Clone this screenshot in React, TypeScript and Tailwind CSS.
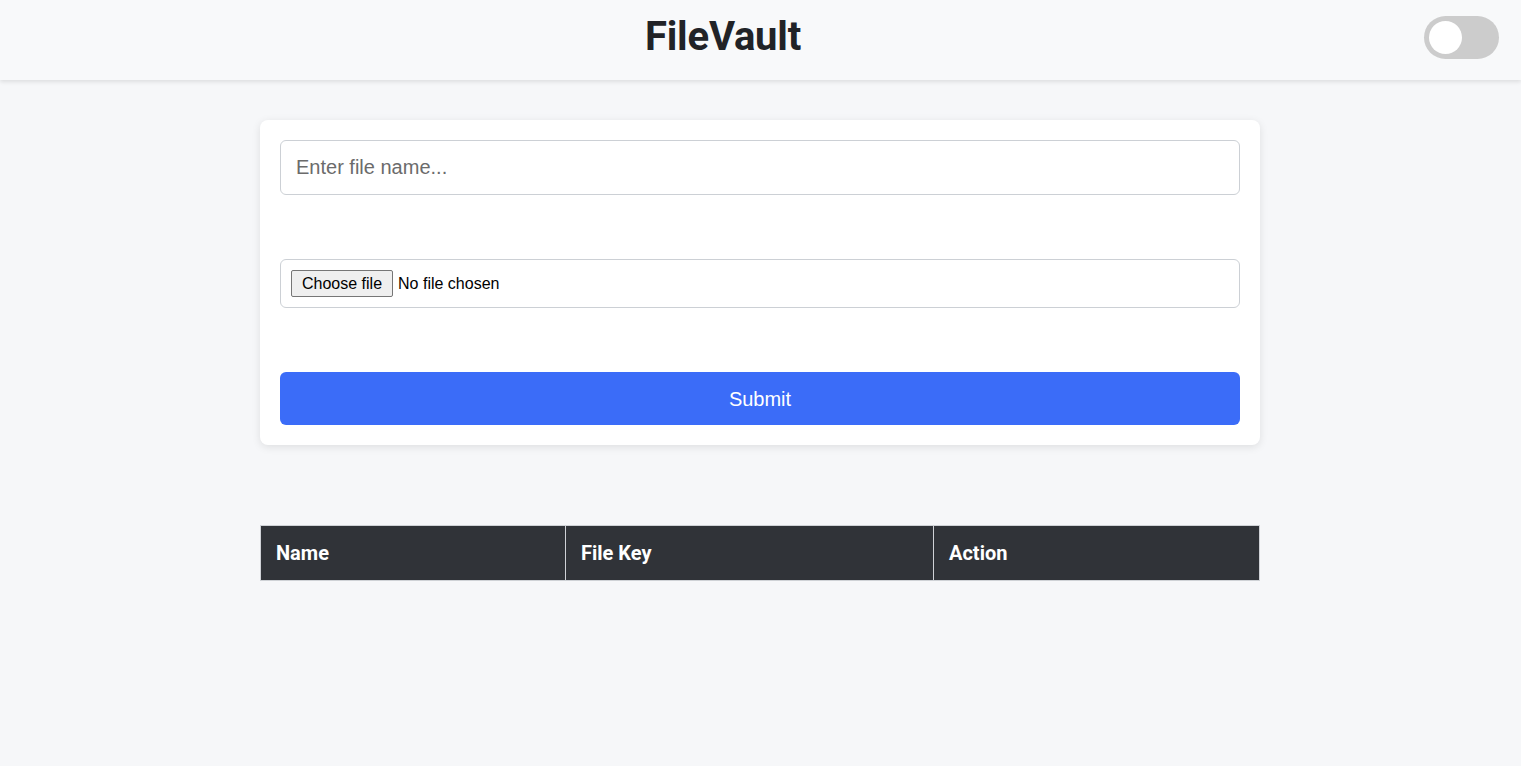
import { useState } from "react";

export default function App() {
  const [dark, setDark] = useState(false);
  const [fileName, setFileName] = useState("");

  return (
    <div className="min-h-screen bg-[#f6f7f9] font-['Liberation_Sans',Arial,sans-serif]">
      {/* Header */}
      <header className="h-[80px] bg-[#f8f9fa] shadow-[0_2px_4px_rgba(0,0,0,0.1)] flex items-center px-[22px] pb-[6px]">
        <h1 className="flex-1 text-center font-['Roboto',sans-serif] font-bold text-[40px] text-[#212327] tracking-[-0.2px]">
          FileVault
        </h1>
        <button
          onClick={() => setDark(!dark)}
          className="w-[75px] h-[43px] rounded-full bg-[#cccccc] flex items-center px-[5px]"
        >
          <span className="w-[33px] h-[33px] rounded-full bg-white block"></span>
        </button>
      </header>

      {/* Upload form */}
      <main className="flex flex-col items-center pt-[40px] pr-px">
        <div className="w-[1000px] bg-white rounded-[8px] shadow-[0_2px_8px_rgba(0,0,0,0.1)] p-[20px] flex flex-col gap-[64px]">
          <input
            type="text"
            placeholder="Enter file name..."
            className="h-[55px] w-full border border-[#ccd0d5] rounded-[6px] px-[15px] text-[20px] text-[#333] placeholder:text-[#6b6b6b] outline-none"
          />
          <label className="h-[49px] w-full border border-[#ccd0d5] rounded-[6px] px-[10px] flex items-center text-[16px] text-black cursor-pointer">
            <input
              type="file"
              className="hidden"
              onChange={(e) => setFileName(e.target.files?.[0]?.name ?? "")}
            />
            <span className="h-[27px] px-[10px] flex items-center border border-[#767676] bg-[#efefef] rounded-[2px] mr-[5px]">
              Choose file
            </span>
            <span>{fileName || "No file chosen"}</span>
          </label>
          <button className="h-[53px] w-full bg-[#3b6cf8] rounded-[6px] text-white text-[20px]">
            Submit
          </button>
        </div>

        {/* File table */}
        <table className="w-[1000px] mt-[80px] border-collapse font-['Roboto',sans-serif]">
          <thead>
            <tr className="bg-[#303338] text-white text-[20px] font-bold h-[55px]">
              <th className="w-[305px] text-left pl-[15px] border border-[#cfd2d6]">Name</th>
              <th className="w-[368px] text-left pl-[15px] border border-[#cfd2d6]">File Key</th>
              <th className="text-left pl-[15px] border border-[#cfd2d6]">Action</th>
            </tr>
          </thead>
          <tbody></tbody>
        </table>
      </main>
    </div>
  );
}
